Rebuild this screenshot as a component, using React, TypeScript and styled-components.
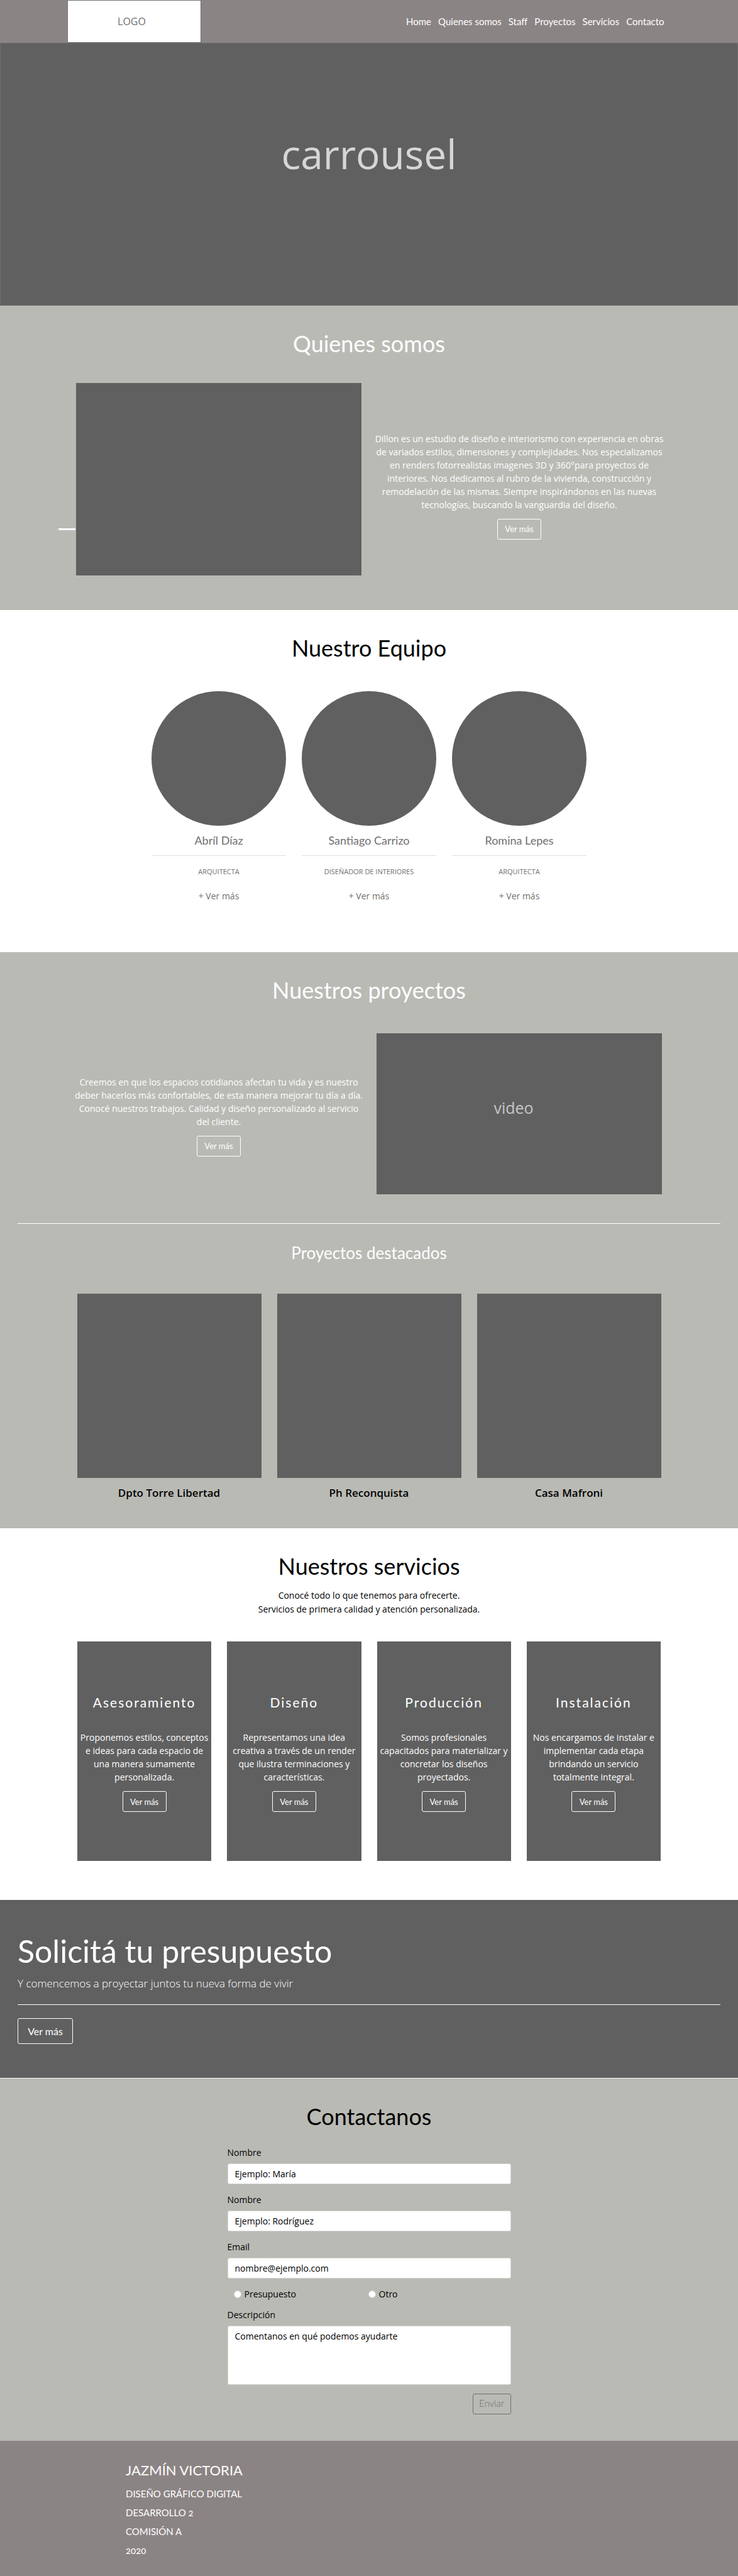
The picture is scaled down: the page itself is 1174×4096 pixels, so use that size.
import React from "react";
import styled, { createGlobalStyle } from "styled-components";

const dark = "#606060";
const sage = "#b9bab4";
const taupe = "#8b8484";
const display = `Lato, "Open Sans", sans-serif`;
const body = `"Open Sans", "Noto Sans", sans-serif`;

const GlobalStyle = createGlobalStyle`
  *, *::before, *::after { box-sizing: border-box; }
  body { margin: 0; font-family: ${body}; font-size: 14px; line-height: 21px; color: #000; background: #fff; }
  h1, h2, h3, p, ul, figure { margin: 0; padding: 0; font-weight: 400; }
  a { color: inherit; text-decoration: none; }
`;

const Header = styled.header`
  display: flex;
  align-items: stretch;
  justify-content: space-between;
  height: 68px;
  padding: 0 10% 0 107px;
  background: ${taupe};
`;

const Logo = styled.a`
  display: flex;
  align-items: center;
  justify-content: center;
  width: 213px;
  padding-right: 8px;
  border: 1px solid #707070;
  background: #fff;
  color: #707070;
  font-size: 16px;
`;

const Nav = styled.nav`
  display: flex;
  align-items: center;
  gap: 11px;
  color: #fff;
  font-family: ${display};
  font-size: 15px;
`;

const Carousel = styled.section`
  display: flex;
  align-items: center;
  justify-content: center;
  height: 418px;
  padding-bottom: 64px;
  border: 1px solid #707070;
  background: ${dark};
  color: #d6d6d6;
  font-size: 64px;
  line-height: 92px;
`;

const Section = styled.section<{ $sage?: boolean; $end: number }>`
  display: flex;
  flex-direction: column;
  align-items: center;
  padding: 36px 28px ${(p) => p.$end}px;
  background: ${(p) => (p.$sage ? sage : "#fff")};
`;

const Heading = styled.h2<{ $light?: boolean }>`
  color: ${(p) => (p.$light ? "#fff" : "#000")};
  font-family: ${display};
  font-size: 36px;
  line-height: 48px;
`;

const SubHeading = styled.h3`
  margin: 30px 0 49px;
  color: #fff;
  font-family: ${display};
  font-size: 26px;
  line-height: 32px;
`;

const Split = styled.div<{ $top: number }>`
  display: grid;
  grid-template-columns: minmax(0, 1fr) minmax(0, 1fr);
  gap: 24px;
  align-items: center;
  width: 100%;
  max-width: 932px;
  margin-top: ${(p) => p.$top}px;
`;

const Blurb = styled.div<{ $drop?: number }>`
  display: flex;
  flex-direction: column;
  align-items: center;
  gap: 12px;
  padding-top: ${(p) => p.$drop ?? 0}px;
  color: #fff;
  text-align: center;
  white-space: nowrap;
`;

const Photo = styled.div`
  position: relative;
  height: 306px;
  background: ${dark};
`;

const Accent = styled.span`
  position: absolute;
  right: calc(100% + 1px);
  bottom: 72px;
  width: 27px;
  height: 3px;
  background: #fff;
`;

const Video = styled.div`
  display: flex;
  align-items: center;
  justify-content: center;
  height: 256px;
  padding: 0 18px 20px 0;
  background: ${dark};
  color: #c8c6c6;
  font-size: 25px;
`;

const Button = styled.button<{ $large?: boolean }>`
  width: ${(p) => (p.$large ? 88 : 70)}px;
  height: ${(p) => (p.$large ? 41 : 33)}px;
  padding: 0;
  border: 1px solid #fff;
  border-radius: 3px;
  background: transparent;
  color: #fff;
  font-family: ${display};
  font-size: ${(p) => (p.$large ? 16 : 13)}px;
`;

const Team = styled.div`
  display: grid;
  grid-template-columns: repeat(3, 214px);
  gap: 25px;
  margin-top: 45px;
`;

const Member = styled.article`
  display: flex;
  flex-direction: column;
  align-items: center;
  color: #707070;
`;

const Portrait = styled.div`
  width: 100%;
  aspect-ratio: 1;
  border-radius: 50%;
  background: ${dark};
`;

const MemberName = styled.h3`
  width: 100%;
  padding: 11px 0 12px;
  border-bottom: 1px solid #dedede;
  font-family: ${display};
  font-size: 18px;
  line-height: 24px;
  text-align: center;
`;

const Role = styled.p`
  margin: 14px 0 18px;
  font-size: 11px;
  line-height: 21px;
`;

const Rule = styled.hr`
  width: 100%;
  height: 1px;
  margin: 0;
  border: 0;
  background: #fff;
`;

const ProjectsRule = styled(Rule)`
  margin-top: 46px;
`;

const QuoteRule = styled(Rule)`
  margin-bottom: 21px;
`;

const Projects = styled.div`
  display: grid;
  grid-template-columns: repeat(3, 1fr);
  gap: 25px;
  width: 100%;
  max-width: 929px;
`;

const Project = styled.figure`
  text-align: center;
`;

const Thumb = styled.div`
  aspect-ratio: 1;
  background: ${dark};
`;

const Caption = styled.figcaption`
  padding-top: 12px;
  font-size: 17px;
  font-weight: 600;
  line-height: 24px;
`;

const Lead = styled.p`
  margin: 12px 0 40px;
  line-height: 22px;
  text-align: center;
`;

const Services = styled.div`
  display: grid;
  grid-template-columns: repeat(4, 1fr);
  gap: 25px;
  width: 100%;
  max-width: 928px;
`;

const Service = styled.article`
  display: flex;
  flex-direction: column;
  align-items: center;
  height: 349px;
  padding-top: 83px;
  background: ${dark};
`;

const ServiceTitle = styled.h3`
  margin-bottom: 31px;
  color: #fff;
  font-family: ${display};
  font-size: 21px;
  line-height: 28px;
  letter-spacing: 2px;
`;

const Quote = styled.section`
  display: flex;
  flex-direction: column;
  align-items: flex-start;
  padding: 51px 28px 54px;
  border-bottom: 1px solid #fff;
  background: ${dark};
  color: #fff;
`;

const QuoteTitle = styled.h2`
  font-family: ${display};
  font-size: 50px;
  line-height: 60px;
`;

const QuoteText = styled.p`
  padding: 8px 0 19px;
  font-size: 17px;
  font-weight: 300;
  line-height: 28px;
`;

const Form = styled.form`
  display: flex;
  flex-direction: column;
  width: 451px;
  max-width: 100%;
  margin-top: 23px;
`;

const Field = styled.label`
  display: flex;
  flex-direction: column;
  gap: 7px;
  margin-bottom: 14px;
`;

const control = `
  display: block;
  width: 100%;
  margin: 0;
  border: 1px solid #d5d5d5;
  border-radius: 3px;
  background: #fff;
  color: #000;
  font-family: ${body};
  font-size: 14px;
  line-height: 21px;
  outline: none;
  &::placeholder { color: #000; opacity: 1; }
`;

const Input = styled.input`
  ${control}
  height: 33px;
  padding: 0 11px;
`;

const TextArea = styled.textarea`
  ${control}
  height: 94px;
  padding: 5px 11px;
  resize: none;
`;

const Options = styled.div`
  display: grid;
  grid-template-columns: 214px 1fr;
  margin-bottom: 12px;
  padding-left: 10px;
`;

const Option = styled.label`
  display: flex;
  align-items: center;
  gap: 5px;
`;

const Radio = styled.input`
  width: 12px;
  height: 12px;
  margin: 0;
  border: 1px solid #d5d5d5;
  border-radius: 50%;
  background: #fff;
  appearance: none;
`;

const Submit = styled.button`
  align-self: flex-end;
  width: 61px;
  height: 33px;
  padding: 0 0 3px;
  border: 1px solid #707070;
  border-radius: 3px;
  background: transparent;
  color: #707070;
  font-family: ${display};
  font-size: 15px;
  font-weight: 300;
`;

const Footer = styled.footer`
  padding: 31px 200px 26px;
  background: ${taupe};
  color: #fff;
  font-family: ${display};
  font-size: 15px;
  font-variant-numeric: oldstyle-nums;
  line-height: 30px;
`;

const FooterTitle = styled.p`
  margin-bottom: 6px;
  font-size: 22px;
  line-height: 32px;
`;

function Lines({ items }: { items: string[] }) {
  return (
    <p>
      {items.map((t, i) => (
        <React.Fragment key={t}>
          {i > 0 && <br />}
          {t}
        </React.Fragment>
      ))}
    </p>
  );
}

const links = ["Home", "Quienes somos", "Staff", "Proyectos", "Servicios", "Contacto"];

const team = [
  { name: "Abríl Díaz", role: "ARQUITECTA" },
  { name: "Santiago Carrizo", role: "DISEÑADOR DE INTERIORES" },
  { name: "Romina Lepes", role: "ARQUITECTA" },
];

const services = [
  { title: "Asesoramiento", text: ["Proponemos estilos, conceptos", "e ideas para cada espacio de", "una manera sumamente", "personalizada."] },
  { title: "Diseño", text: ["Representamos una idea", "creativa a través de un render", "que ilustra terminaciones y", "características."] },
  { title: "Producción", text: ["Somos profesionales", "capacitados para materializar y", "concretar los diseños", "proyectados."] },
  { title: "Instalación", text: ["Nos encargamos de instalar e", "implementar cada etapa", "brindando un servicio", "totalmente integral."] },
];

export default function App() {
  return (
    <>
      <GlobalStyle />
      <Header>
        <Logo href="#">LOGO</Logo>
        <Nav>
          {links.map((l) => (
            <a key={l} href="#">{l}</a>
          ))}
        </Nav>
      </Header>
      <Carousel>carrousel</Carousel>

      <Section $sage $end={55}>
        <Heading $light>Quienes somos</Heading>
        <Split $top={39}>
          <Photo>
            <Accent />
          </Photo>
          <Blurb $drop={20}>
            <Lines
              items={[
                "Dillon es un estudio de diseño e interiorismo con experiencia en obras",
                "de variados estilos, dimensiones y complejidades. Nos especializamos",
                "en renders fotorrealistas imagenes 3D y 360°para proyectos de",
                "interiores. Nos dedicamos al rubro de la vivienda, construcción y",
                "remodelación de las mismas. Siempre inspirándonos en las nuevas",
                "tecnologías, buscando la vanguardia del diseño.",
              ]}
            />
            <Button>Ver más</Button>
          </Blurb>
        </Split>
      </Section>

      <Section $end={79}>
        <Heading>Nuestro Equipo</Heading>
        <Team>
          {team.map((m) => (
            <Member key={m.name}>
              <Portrait />
              <MemberName>{m.name}</MemberName>
              <Role>{m.role}</Role>
              <a href="#">+ Ver más</a>
            </Member>
          ))}
        </Team>
      </Section>

      <Section $sage $end={44}>
        <Heading $light>Nuestros proyectos</Heading>
        <Split $top={45}>
          <Blurb $drop={6}>
            <Lines
              items={[
                "Creemos en que los espacios cotidianos afectan tu vida y es nuestro",
                "deber hacerlos más confortables, de esta manera mejorar tu día a día.",
                "Conocé nuestros trabajos. Calidad y diseño personalizado al servicio",
                "del cliente.",
              ]}
            />
            <Button>Ver más</Button>
          </Blurb>
          <Video>video</Video>
        </Split>
        <ProjectsRule />
        <SubHeading>Proyectos destacados</SubHeading>
        <Projects>
          {["Dpto Torre Libertad", "Ph Reconquista", "Casa Mafroni"].map((p) => (
            <Project key={p}>
              <Thumb />
              <Caption>{p}</Caption>
            </Project>
          ))}
        </Projects>
      </Section>

      <Section $end={62}>
        <Heading>Nuestros servicios</Heading>
        <Lead>
          Conocé todo lo que tenemos para ofrecerte.
          <br />
          Servicios de primera calidad y atención personalizada.
        </Lead>
        <Services>
          {services.map((s) => (
            <Service key={s.title}>
              <ServiceTitle>{s.title}</ServiceTitle>
              <Blurb>
                <Lines items={s.text} />
                <Button>Ver más</Button>
              </Blurb>
            </Service>
          ))}
        </Services>
      </Section>

      <Quote>
        <QuoteTitle>Solicitá tu presupuesto</QuoteTitle>
        <QuoteText>Y comencemos a proyectar juntos tu nueva forma de vivir</QuoteText>
        <QuoteRule />
        <Button $large>Ver más</Button>
      </Quote>

      <Section $sage $end={42}>
        <Heading>Contactanos</Heading>
        <Form onSubmit={(e) => e.preventDefault()}>
          <Field>
            Nombre
            <Input type="text" placeholder="Ejemplo: María" />
          </Field>
          <Field>
            Nombre
            <Input type="text" placeholder="Ejemplo: Rodríguez" />
          </Field>
          <Field>
            Email
            <Input type="email" placeholder="nombre@ejemplo.com" />
          </Field>
          <Options>
            <Option>
              <Radio type="radio" name="motivo" /> Presupuesto
            </Option>
            <Option>
              <Radio type="radio" name="motivo" /> Otro
            </Option>
          </Options>
          <Field>
            Descripción
            <TextArea placeholder="Comentanos en qué podemos ayudarte" />
          </Field>
          <Submit type="submit">Enviar</Submit>
        </Form>
      </Section>

      <Footer>
        <FooterTitle>JAZMÍN VICTORIA</FooterTitle>
        <p>DISEÑO GRÁFICO DIGITAL</p>
        <p>DESARROLLO 2</p>
        <p>COMISIÓN A</p>
        <p>2020</p>
      </Footer>
    </>
  );
}
